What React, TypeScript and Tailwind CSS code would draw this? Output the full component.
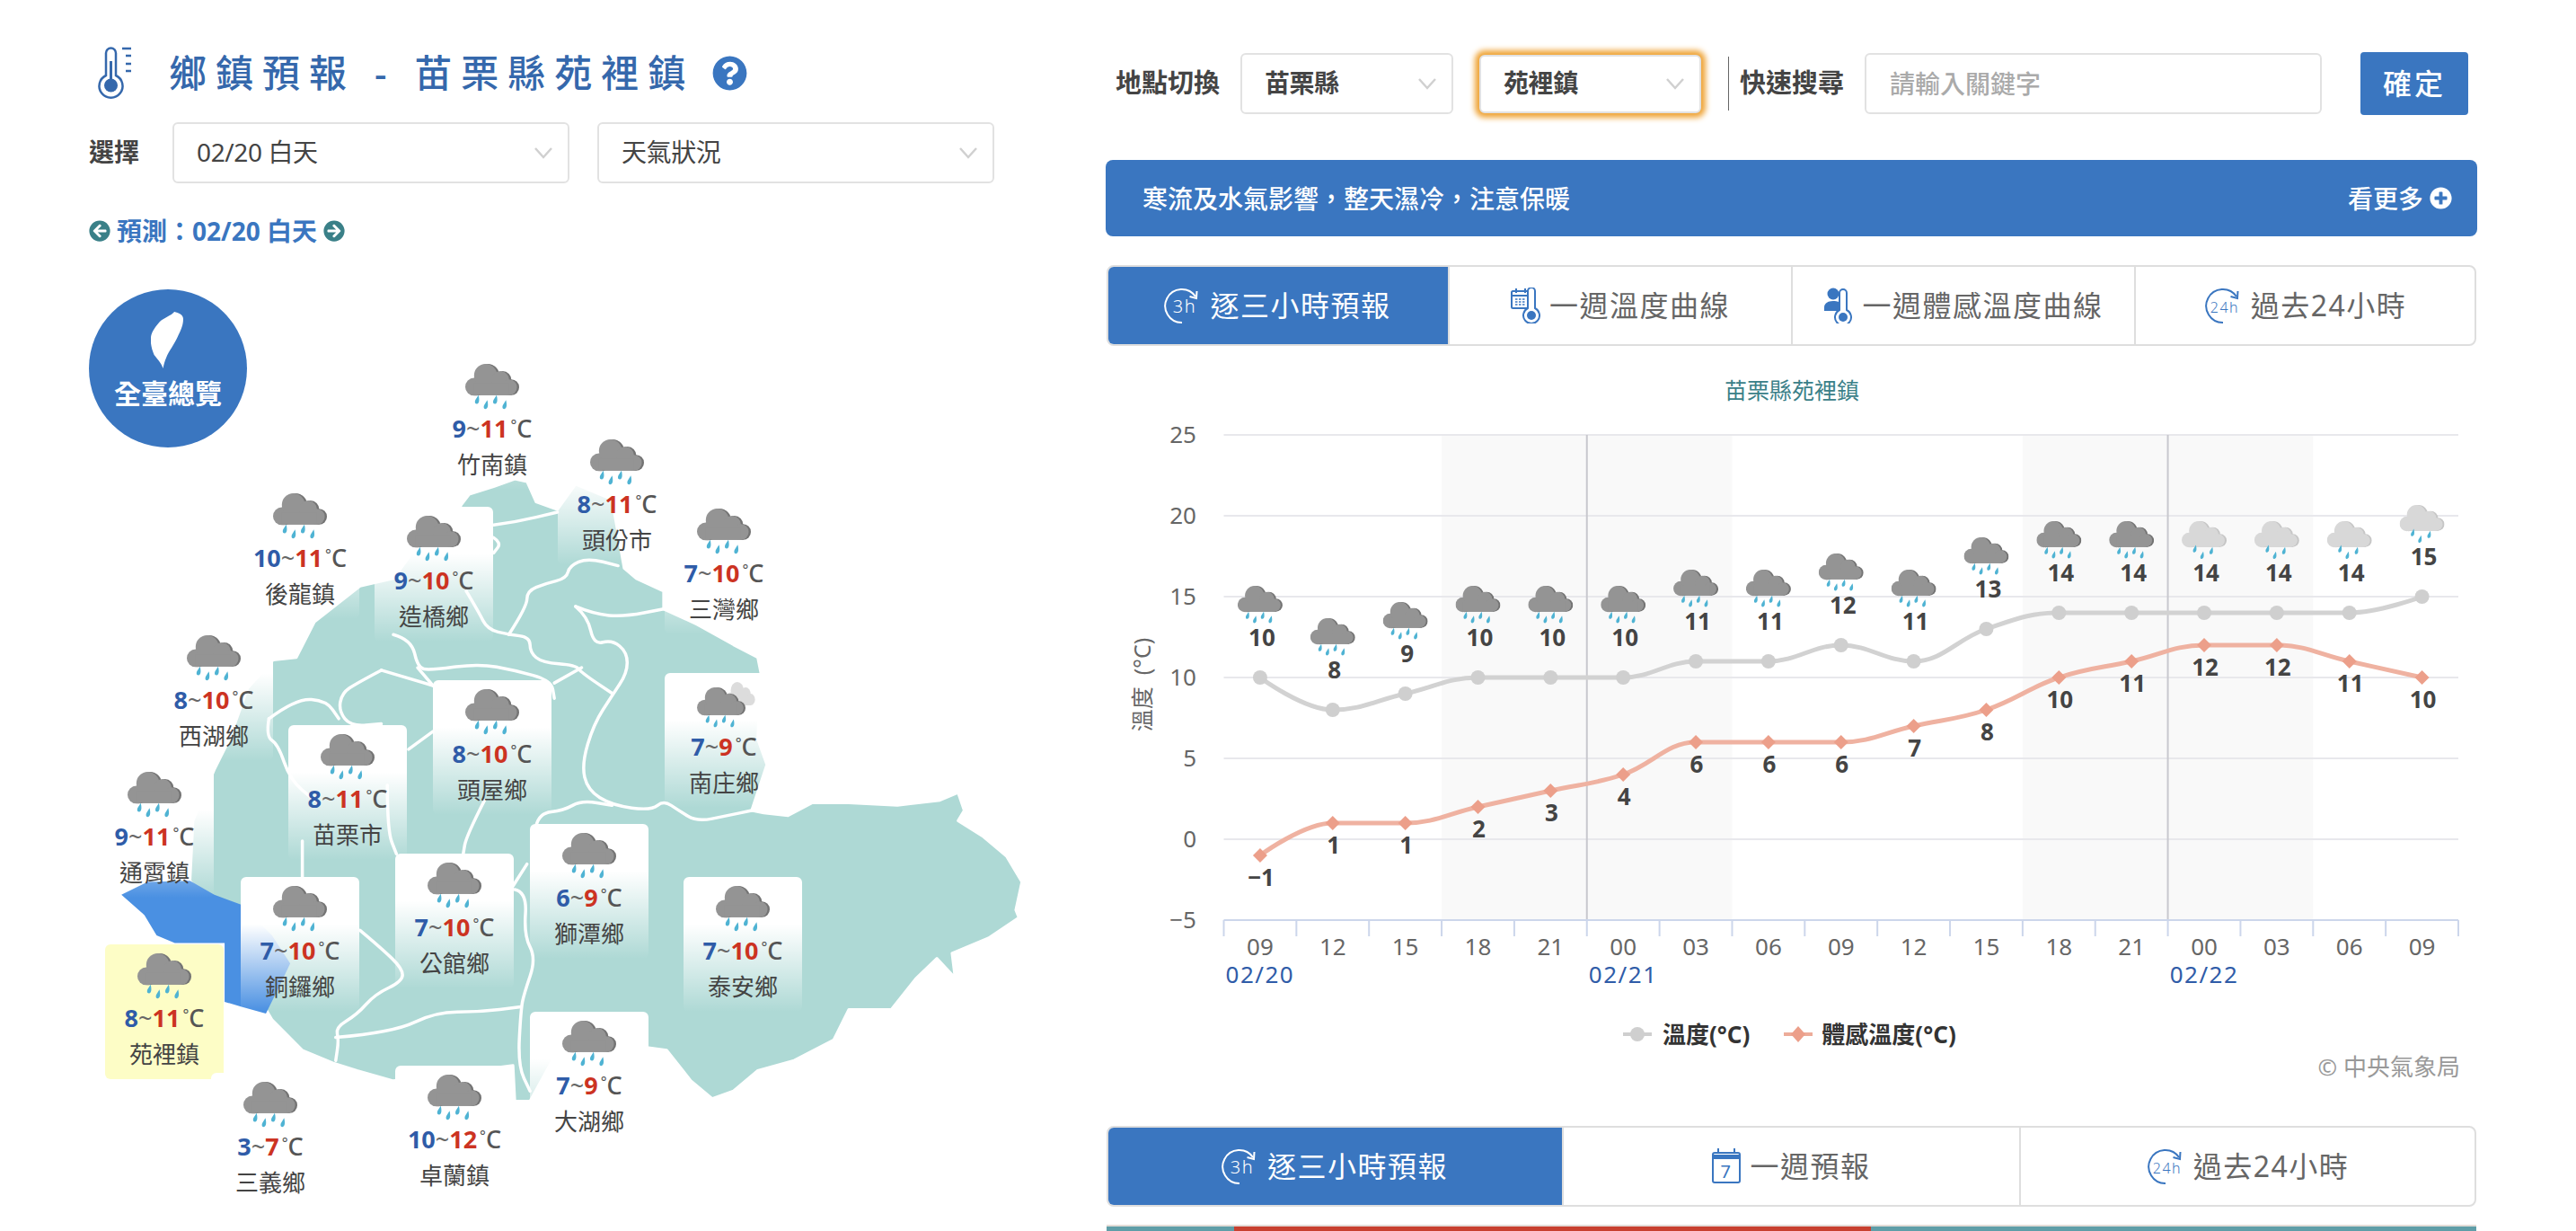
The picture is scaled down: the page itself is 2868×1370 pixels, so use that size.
import { FaArrowCircleLeft, FaArrowCircleRight, FaPlusCircle, FaQuestionCircle } from 'react-icons/fa';

type Town = { name: string; low: number; high: number; cx: number; top: number; selected?: boolean; extraCloud?: boolean };

const TOWNS: Town[] = [
  { name: '竹南鎮', low: 9, high: 11, cx: 548, top: 393 },
  { name: '頭份市', low: 8, high: 11, cx: 687, top: 477 },
  { name: '後龍鎮', low: 10, high: 11, cx: 334, top: 537 },
  { name: '造橋鄉', low: 9, high: 10, cx: 483, top: 562 },
  { name: '三灣鄉', low: 7, high: 10, cx: 806, top: 554 },
  { name: '西湖鄉', low: 8, high: 10, cx: 238, top: 695 },
  { name: '苗栗市', low: 8, high: 11, cx: 387, top: 805 },
  { name: '頭屋鄉', low: 8, high: 10, cx: 548, top: 755 },
  { name: '南庄鄉', low: 7, high: 9, cx: 806, top: 747, extraCloud: true },
  { name: '通霄鎮', low: 9, high: 11, cx: 172, top: 847 },
  { name: '獅潭鄉', low: 6, high: 9, cx: 656, top: 915 },
  { name: '公館鄉', low: 7, high: 10, cx: 506, top: 948 },
  { name: '銅鑼鄉', low: 7, high: 10, cx: 334, top: 974 },
  { name: '泰安鄉', low: 7, high: 10, cx: 827, top: 974 },
  { name: '苑裡鎮', low: 8, high: 11, cx: 183, top: 1049, selected: true },
  { name: '大湖鄉', low: 7, high: 9, cx: 656, top: 1124 },
  { name: '卓蘭鎮', low: 10, high: 12, cx: 506, top: 1184 },
  { name: '三義鄉', low: 3, high: 7, cx: 301, top: 1192 },
];

const LAND =
  'M612 140 625 120 665 105 700 90 720 95 735 135 770 150 800 100 860 130 880 265 900 285 945 310 945 345 1000 375 1060 415 1100 440 1105 470 1100 600 1115 650 1090 740 1110 745 1150 750 1190 725 1250 725 1330 730 1400 720 1430 705 1440 740 1430 760 1470 790 1510 830 1535 880 1525 935 1530 950 1480 990 1420 1020 1425 1068 1395 1030 1360 1070 1320 1130 1250 1130 1225 1190 1160 1230 1100 1250 1060 1290 1025 1305 990 1270 950 1210 920 1205 780 1190 725 1310 700 1310 697 1240 500 1270 440 1250 400 1235 350 1210 300 1150 290 1130 250 1000 165 878 170 760 205 660 230 600 260 500 302 445 340 440 370 370 445 300 500 285 540 220 600 170Z';
const YUANLI = 'M52 905 95 880 165 878 205 905 250 925 300 985 330 1040 310 1090 290 1138 250 1125 222 1115 222 1000 140 1000 110 985 90 945Z';

const BORDERS: number[][][] = [
  [[665, 180], [700, 175], [770, 155]],
  [[665, 205], [678, 215], [665, 235]],
  [[620, 310], [640, 350], [655, 385], [690, 395], [725, 400], [725, 430], [745, 450], [800, 455], [810, 470], [860, 510]],
  [[690, 395], [720, 340], [720, 310], [750, 295], [785, 285], [790, 260], [820, 245], [870, 260]],
  [[800, 340], [820, 360], [830, 415], [860, 405], [885, 430], [885, 470], [860, 515], [830, 570], [810, 650], [820, 700], [860, 730], [925, 740], [945, 720], [970, 740], [1000, 762], [1050, 750], [1090, 740]],
  [[800, 340], [830, 355], [880, 360], [945, 345]],
  [[500, 395], [530, 405], [540, 460], [560, 465], [640, 452], [700, 465], [760, 485], [765, 520]],
  [[765, 490], [810, 460]],
  [[540, 460], [565, 495]],
  [[480, 465], [565, 495]],
  [[480, 465], [440, 490], [415, 510], [410, 545], [430, 575], [480, 570]],
  [[525, 620], [565, 585]],
  [[295, 560], [340, 520], [390, 525], [410, 560]],
  [[295, 560], [290, 595], [310, 610], [330, 680], [370, 720]],
  [[350, 800], [350, 870]],
  [[490, 690], [490, 780], [505, 825]],
  [[650, 720], [620, 790], [615, 825]],
  [[445, 975], [480, 1010], [515, 1050], [515, 1075], [470, 1100], [440, 1140], [405, 1165], [410, 1190], [405, 1230]],
  [[405, 1185], [500, 1175], [570, 1135], [640, 1135], [710, 1125]],
  [[697, 888], [720, 845]],
  [[700, 895], [720, 900], [715, 985], [735, 1030], [715, 1100], [710, 1130], [705, 1240], [725, 1290]],
  [[735, 770], [740, 745], [780, 740], [810, 720], [860, 730]],
];

function smooth(points: number[][]) {
  let d = `M${points[0][0]} ${points[0][1]}`;
  for (let i = 1; i < points.length - 1; i++) {
    const mx = (points[i][0] + points[i + 1][0]) / 2;
    const my = (points[i][1] + points[i + 1][1]) / 2;
    d += `Q${points[i][0]} ${points[i][1]} ${mx} ${my}`;
  }
  const last = points[points.length - 1];
  return `${d}L${last[0]} ${last[1]}`;
}

function drop(x: number, y: number) {
  return `M${x + 3} ${y - 11}C${x + 5} ${y - 3} ${x + 5} ${y + 4} ${x} ${y + 5}C${x - 4} ${y + 5} ${x - 4} ${y} ${x - 2} ${y - 3}Z`;
}

function CloudShape({ dx = 0, fill }: { dx?: number; fill: string }) {
  return (
    <g fill={fill} transform={`translate(${dx} 0)`}>
      <circle cx="16" cy="41" r="16" />
      <circle cx="37" cy="21" r="21" />
      <circle cx="64" cy="29" r="16" />
      <circle cx="80" cy="42" r="14" />
      <rect x="16" y="34" width="64" height="22" />
    </g>
  );
}

// 98x84 box; light=true is the pale cloud with three small drops
function RainIcon({ light = false, x, y, width = 98, height = 84 }: { light?: boolean; x?: number; y?: number; width?: number; height?: number }) {
  return (
    <svg x={x} y={y} width={width} height={height} viewBox="0 0 98 84" preserveAspectRatio="none" className="block">
      <CloudShape dx={4} fill={light ? '#c6c6c6' : '#737373'} />
      <CloudShape fill={light ? '#d8d8d8' : '#949494'} />
      <g fill="#4fb3d3">
        {light ? (
          <>
            <path d={drop(28, 63)} />
            <path d={drop(44, 77)} />
            <path d={drop(64, 67)} />
          </>
        ) : (
          <>
            <path d={drop(21, 67)} />
            <path d={drop(37, 76)} />
            <path d={drop(54, 67)} />
            <path d={drop(71, 76)} />
          </>
        )}
      </g>
    </svg>
  );
}

function TownCard({ town }: { town: Town }) {
  const bg = town.selected
    ? 'bg-[#fdfdc6]'
    : 'bg-[linear-gradient(to_bottom,#ffffff_35%,rgba(255,255,255,0)_100%)]';
  return (
    <div
      className={`absolute flex h-[150px] w-[132px] flex-col items-center rounded-md pt-[10px] ${bg}`}
      style={{ left: town.cx - 66, top: town.top - 300 }}
    >
      {town.extraCloud ? (
        <div className="relative h-[52px] w-[60px]">
          <svg width="34" height="26" viewBox="0 0 98 56" preserveAspectRatio="none" className="absolute -right-[6px] top-0">
            <CloudShape fill="#dcdcdc" />
          </svg>
          <div className="absolute left-0 top-[6px]">
            <RainIcon width={54} height={46} />
          </div>
        </div>
      ) : (
        <RainIcon width={60} height={52} />
      )}
      <div className="mt-[4px] h-[32px] whitespace-nowrap text-[27px] font-bold leading-[32px] text-[#555]">
        <span className="text-[#2f5ca8]">{town.low}</span>
        <span className="font-normal text-[#666]">~</span>
        <span className="text-[#cc3322]">{town.high}</span>
        <span className="relative -top-[8px] ml-[3px] text-[16px] font-normal">°</span>
        <span className="font-medium">C</span>
      </div>
      <div className="mt-[7px] text-[26px] leading-[34px] text-[#444]">{town.name}</div>
    </div>
  );
}

function CountyMap() {
  return (
    <div className="relative h-[1070px]">
      <svg viewBox="0 0 1568 1568" preserveAspectRatio="none" className="absolute left-[100px] top-[180px] h-[890px] w-[1060px]">
        <path d={LAND} fill="#aed9d5" stroke="#ffffff" strokeWidth="3" vectorEffect="non-scaling-stroke" strokeLinejoin="round" />
        <path d={YUANLI} fill="#4a90e2" />
        {BORDERS.map((b, i) => (
          <path key={i} d={smooth(b)} fill="none" stroke="#ffffff" strokeWidth="3.5" strokeLinecap="round" vectorEffect="non-scaling-stroke" />
        ))}
      </svg>
      {TOWNS.map((t) => (
        <TownCard key={t.name} town={t} />
      ))}
      <div className="absolute left-[99px] top-[20px] flex h-[176px] w-[176px] flex-col items-center rounded-full bg-[#3a76c0] pt-[25px]">
        <svg width="36" height="63" viewBox="0 0 40 63" fill="#ffffff" preserveAspectRatio="none" className="-ml-[3px]">
          <path d="M29 0C34 1 40 3 40 8C40 16 36 22 33 28C29 36 22 44 19 51C17 55 16 59 15 63C13 57 9 54 4 48C1 42 -1 34 0 28C1 22 6 16 11 11C17 6 24 5 29 0Z" />
        </svg>
        <span className="mt-[11px] text-[30px] font-bold leading-[34px] text-white">全臺總覽</span>
      </div>
    </div>
  );
}

function FakeSelect({ label, className, bold = false }: { label: string; className: string; bold?: boolean }) {
  return (
    <div className={`flex items-center justify-between rounded-md border-2 border-[#e2e2e2] bg-white pl-[25px] pr-[16px] ${className}`}>
      <span className={`-mt-[2px] text-[28px] leading-none tracking-[-0.4px] text-[#444] ${bold ? 'font-bold' : ''}`}>{label}</span>
      <svg width="22" height="14" viewBox="0 0 22 14" fill="none" stroke="#d0d0d0" strokeWidth="2.5">
        <path d="M2 2 11 12 20 2" />
      </svg>
    </div>
  );
}

const BLUE = '#3a76c0';

function CycleIcon({ label, color }: { label: string; color: string }) {
  return (
    <svg width="42" height="40" viewBox="0 0 42 40" fill="none" className="shrink-0">
      <path d="M21 39A18.5 18.5 0 1 1 36 10" stroke={color} strokeWidth="2" />
      <path d="M37.500 4 37 12 29.500 10" stroke={color} strokeWidth="2" />
      <text x={label.length > 2 ? 23 : 24} y="28" textAnchor="middle" fill={color} fontSize={label.length > 2 ? 16 : 20} className="font-light">
        {label}
      </text>
    </svg>
  );
}

function Thermo({ x, top = 0 }: { x: number; top?: number }) {
  return (
    <g fill="none" stroke={BLUE} strokeWidth="2">
      <path d={`M${x - 4} ${top + 22}V${top + 3}a4 4 0 0 1 8 0V${top + 22}a9 9 0 1 1 -8 0Z`} fill="#ffffff" />
      <circle cx={x} cy={top + 30} r="5" fill={BLUE} stroke="none" />
    </g>
  );
}

function CalendarThermoIcon() {
  return (
    <svg width="33" height="40" viewBox="0 0 33 40" className="shrink-0">
      <g fill="none" stroke={BLUE} strokeWidth="2">
        <rect x="1" y="4" width="21" height="19" rx="1.500" />
        <path d="M6 1V6M16 1V6M1 9H22" />
        <path d="M5 13H17M5 16H17M5 19H17" strokeWidth="1.500" strokeDasharray="2.500 1.500" />
      </g>
      <Thermo x={23} top={1} />
    </svg>
  );
}

function PersonThermoIcon() {
  return (
    <svg width="33" height="40" viewBox="0 0 33 40" className="shrink-0">
      <circle cx="11" cy="7" r="6.500" fill={BLUE} />
      <path d="M1 26V22C1 17 6 15 11 15C16 15 18 16 19 18V26Z" fill={BLUE} />
      <Thermo x={22} top={3} />
    </svg>
  );
}

function CalendarSevenIcon() {
  return (
    <svg width="32" height="40" viewBox="0 0 32 40" className="shrink-0">
      <g fill="none" stroke={BLUE} strokeWidth="2">
        <rect x="1" y="5" width="30" height="33" rx="2" />
        <path d="M7 0V6M25 0V6" />
      </g>
      <rect x="1" y="7" width="30" height="5" fill={BLUE} />
      <text x="16" y="33" textAnchor="middle" fontSize="20" fill={BLUE}>
        7
      </text>
    </svg>
  );
}

function Tabs({ tabs, cols }: { tabs: { icon: React.ReactNode; label: string }[]; cols: string }) {
  return (
    <div className={`grid h-[90px] ${cols} overflow-hidden rounded-lg border-2 border-[#dedede]`}>
      {tabs.map((t, i) => (
        <div
          key={t.label}
          className={`flex items-center justify-center gap-[10px] text-[32px] tracking-[1.5px] ${
            i === 0 ? '-my-[2px] -ml-[2px] bg-[#3a76c0] text-white' : 'border-l-2 border-[#dedede] text-[#666]'
          }`}
        >
          {t.icon}
          <span>{t.label}</span>
        </div>
      ))}
    </div>
  );
}

// Chart geometry is in page pixels, the svg viewBox is set to match
const HOURS = ['09', '12', '15', '18', '21', '00', '03', '06', '09', '12', '15', '18', '21', '00', '03', '06', '09'];
const TEMP = [10, 8, 9, 10, 10, 10, 11, 11, 12, 11, 13, 14, 14, 14, 14, 14, 15];
const FEEL = [-1, 1, 1, 2, 3, 4, 6, 6, 6, 7, 8, 10, 11, 12, 12, 11, 10];
const LEFT = 1362.5;
const RIGHT = 2737;
const STEP = (RIGHT - LEFT) / 17;
const px = (i: number) => LEFT + STEP * (i + 0.5);
const py = (t: number) => 934 - 18 * t;

function spline(values: number[]) {
  const pts = values.map((v, i) => [px(i), py(v)]);
  const controls = pts.map((p, i) => {
    const prev = pts[i - 1];
    const next = pts[i + 1];
    if (!prev || !next) return { l: p, r: p };
    const lx = (1.5 * p[0] + prev[0]) / 2.5;
    let ly = (1.5 * p[1] + prev[1]) / 2.5;
    const rx = (1.5 * p[0] + next[0]) / 2.5;
    let ry = (1.5 * p[1] + next[1]) / 2.5;
    const corr = ((ry - ly) * (rx - p[0])) / (rx - lx) + p[1] - ry;
    ly += corr;
    ry += corr;
    if (ly > p[1] && ly > prev[1]) {
      ly = Math.max(p[1], prev[1]);
      ry = 2 * p[1] - ly;
    } else if (ly < p[1] && ly < prev[1]) {
      ly = Math.min(p[1], prev[1]);
      ry = 2 * p[1] - ly;
    }
    if (ry > p[1] && ry > next[1]) {
      ry = Math.max(p[1], next[1]);
      ly = 2 * p[1] - ry;
    } else if (ry < p[1] && ry < next[1]) {
      ry = Math.min(p[1], next[1]);
      ly = 2 * p[1] - ry;
    }
    return { l: [lx, ly], r: [rx, ry] };
  });
  let d = `M${pts[0][0]} ${pts[0][1]}`;
  for (let i = 1; i < pts.length; i++) {
    d += `C${controls[i - 1].r[0]} ${controls[i - 1].r[1]} ${controls[i].l[0]} ${controls[i].l[1]} ${pts[i][0]} ${pts[i][1]}`;
  }
  return d;
}

function Chart() {
  return (
    <svg viewBox="1232 385 1525 735" className="block h-[735px] w-[1525px]">
      <text x="1995" y="444" textAnchor="middle" className="fill-[#3a8088] text-[25px]">
        苗栗縣苑裡鎮
      </text>
      <rect x={LEFT + STEP * 3} y="484" width={STEP * 4} height="540" fill="#f9f9f9" />
      <rect x={LEFT + STEP * 11} y="484" width={STEP * 4} height="540" fill="#f9f9f9" />
      {[25, 20, 15, 10, 5, 0].map((t) => (
        <line key={t} x1={LEFT} x2={RIGHT} y1={py(t)} y2={py(t)} stroke="#e8e8ec" strokeWidth="2" />
      ))}
      {[25, 20, 15, 10, 5, 0, -5].map((t) => (
        <text key={t} x="1332" y={py(t) + 9} textAnchor="end" className="fill-[#666] text-[26px]">
          {t < 0 ? `−${-t}` : t}
        </text>
      ))}
      <text transform="translate(1281 762) rotate(-90)" textAnchor="middle" className="fill-[#666] text-[25px]">
        溫度 &nbsp;(°C)
      </text>
      <line x1={LEFT + STEP * 5} x2={LEFT + STEP * 5} y1="484" y2="1024" stroke="#c8c8ce" strokeWidth="2" />
      <line x1={LEFT + STEP * 13} x2={LEFT + STEP * 13} y1="484" y2="1024" stroke="#c8c8ce" strokeWidth="2" />
      <line x1={LEFT} x2={RIGHT} y1="1024" y2="1024" stroke="#ccd6eb" strokeWidth="2" />
      {Array.from({ length: 18 }, (_, i) => (
        <line key={i} x1={LEFT + STEP * i} x2={LEFT + STEP * i} y1="1024" y2="1042" stroke="#ccd6eb" strokeWidth="2" />
      ))}
      {HOURS.map((h, i) => (
        <text key={i} x={px(i)} y="1063" textAnchor="middle" className="fill-[#666] text-[26px]">
          {h}
        </text>
      ))}
      {[
        ['02/20', 0],
        ['02/21', 5],
        ['02/22', 13],
      ].map(([d, i]) => (
        <text key={d} x={px(i as number)} y="1094" textAnchor="middle" letterSpacing="1.5" className="fill-[#2f5ca8] text-[26px]">
          {d}
        </text>
      ))}
      <path d={spline(TEMP)} fill="none" stroke="#d2d2d2" strokeWidth="5" />
      <path d={spline(FEEL)} fill="none" stroke="#efb2a1" strokeWidth="5" />
      {TEMP.map((t, i) => (
        <g key={i}>
          <circle cx={px(i)} cy={py(t)} r="8" fill="#cfcfcf" />
          <RainIcon light={i >= 13} x={px(i) - 25} y={py(t) - 102} width={50} height={43} />
          <text x={px(i) + 2} y={py(t) - 35} textAnchor="middle" className="fill-[#444] text-[26px] font-bold">
            {t}
          </text>
        </g>
      ))}
      {FEEL.map((t, i) => (
        <g key={i}>
          <path d={`M${px(i)} ${py(t) - 8}l8 8 -8 8 -8 -8Z`} fill="#ec9f8a" />
          <text x={px(i) + 1} y={py(t) + 34} textAnchor="middle" className="fill-[#444] text-[26px] font-bold">
            {t < 0 ? `−${-t}` : t}
          </text>
        </g>
      ))}
    </svg>
  );
}

export default function App() {
  return (
    <div className="flex h-[1370px] w-[2868px] overflow-hidden bg-white font-['Noto_Sans','Noto_Sans_CJK_TC',sans-serif]">
      <div className="w-[1232px] shrink-0">
        <div className="mt-[50px] flex h-[64px] items-center pl-[105px]">
          <svg width="42" height="64" viewBox="0 0 42 64" fill="none" stroke="#3568ac" strokeWidth="2.500" className="shrink-0">
            <path d="M13 34V9a5.500 5.500 0 0 1 11 0V34a13 13 0 1 1 -11 0Z" />
            <circle cx="18.500" cy="45" r="7.500" fill="#3568ac" stroke="none" />
            <path d="M18.500 18V40" strokeWidth="3" />
            <path d="M31 4H41M35 12H41M35 21H41M35 29H41" />
          </svg>
          <h1 className="ml-[41px] -mt-[3px] whitespace-nowrap text-[42px] font-medium leading-none tracking-[10px] text-[#3568ac]">鄉鎮預報 - 苗栗縣苑裡鎮</h1>
          <FaQuestionCircle className="ml-[20px] -mt-[2px] shrink-0 text-[39px] text-[#3a76c0]" />
        </div>
        <div className="mt-[22px] flex h-[68px] items-center pl-[99px]">
          <span className="-mt-[2px] text-[28px] font-bold text-[#444]">選擇</span>
          <FakeSelect label="02/20 白天" className="ml-[37px] h-full w-[442px]" />
          <FakeSelect label="天氣狀況" className="ml-[31px] h-full w-[442px]" />
        </div>
        <div className="mt-[38px] flex h-[30px] items-center gap-[7px] pl-[99px] text-[28px] font-bold text-[#3a76c0]">
          <FaArrowCircleLeft className="text-[24px] text-[#3a8088]" />
          <span>預測：02/20 白天</span>
          <FaArrowCircleRight className="text-[24px] text-[#3a8088]" />
        </div>
        <div className="mt-[30px]">
          <CountyMap />
        </div>
      </div>

      <div className="w-[1525px] shrink-0">
        <div className="mt-[58px] flex h-[70px] items-center">
          <span className="-mt-[2px] ml-[10px] text-[29px] font-bold text-[#444]">地點切換</span>
          <FakeSelect label="苗栗縣" bold className="ml-[23px] h-[68px] w-[237px]" />
          <FakeSelect
            label="苑裡鎮"
            bold
            className="ml-[29px] h-[65px] w-[247px] shadow-[0_0_6px_5px_#efa437]"
          />
          <div className="ml-[30px] h-[60px] w-px bg-[#666]" />
          <span className="-mt-[2px] ml-[12px] text-[29px] font-bold text-[#444]">快速搜尋</span>
          <input
            placeholder="請輸入關鍵字"
            className="ml-[23px] h-[68px] w-[509px] rounded-md border-2 border-[#e2e2e2] pl-[26px] text-[28px] font-medium outline-none placeholder:text-[#aaa]"
          />
          <button className="ml-[43px] h-[70px] w-[120px] rounded-sm bg-[#3a76c0] text-[32px] font-medium tracking-[3px] text-white">確定</button>
        </div>
        <div className="-ml-px mt-[50px] flex h-[85px] w-[1527px] items-center justify-between rounded-lg bg-[#3a76c0] pl-[41px] pr-[28px] text-[28px] font-medium text-white">
          <span>寒流及水氣影響，整天濕冷，注意保暖</span>
          <span className="flex items-center gap-[7px]">
            看更多
            <FaPlusCircle className="text-[25px]" />
          </span>
        </div>
        <div className="mt-[32px]">
          <Tabs
            cols="grid-cols-[378px_382px_382px_1fr]"
            tabs={[
              { icon: <CycleIcon label="3h" color="#ffffff" />, label: '逐三小時預報' },
              { icon: <CalendarThermoIcon />, label: '一週溫度曲線' },
              { icon: <PersonThermoIcon />, label: '一週體感溫度曲線' },
              { icon: <CycleIcon label="24h" color={BLUE} />, label: '過去24小時' },
            ]}
          />
        </div>
        <Chart />
        <div className="mt-[10px] flex h-[42px] items-center text-[26px] font-bold text-[#333]">
          <svg width="32" height="20" viewBox="0 0 32 20" className="ml-[575px]">
            <path d="M0 10H32" stroke="#cfcfcf" strokeWidth="4" />
            <circle cx="16" cy="10" r="8" fill="#cfcfcf" />
          </svg>
          <span className="ml-[12px]">溫度(°C)</span>
          <svg width="32" height="20" viewBox="0 0 32 20" className="ml-[38px]">
            <path d="M0 10H32" stroke="#edac99" strokeWidth="4" />
            <path d="M16 1l8 9 -8 9 -8 -9Z" fill="#ec9f8a" />
          </svg>
          <span className="ml-[10px]">體感溫度(°C)</span>
        </div>
        <div className="mt-[1px] pr-[18px] text-right text-[26px] leading-[28px] text-[#999]">© 中央氣象局</div>
        <div className="mt-[52px]">
          <Tabs
            cols="grid-cols-[505px_509px_1fr]"
            tabs={[
              { icon: <CycleIcon label="3h" color="#ffffff" />, label: '逐三小時預報' },
              { icon: <CalendarSevenIcon />, label: '一週預報' },
              { icon: <CycleIcon label="24h" color={BLUE} />, label: '過去24小時' },
            ]}
          />
        </div>
        <div className="mt-[20px] flex h-[7px] border-t-2 border-[#e3dcd8]">
          <div className="w-[142px] bg-[#5f9ea8]" />
          <div className="w-[709px] bg-[#c8402f]" />
          <div className="flex-1 bg-[#5f9ea8]" />
        </div>
      </div>
    </div>
  );
}
